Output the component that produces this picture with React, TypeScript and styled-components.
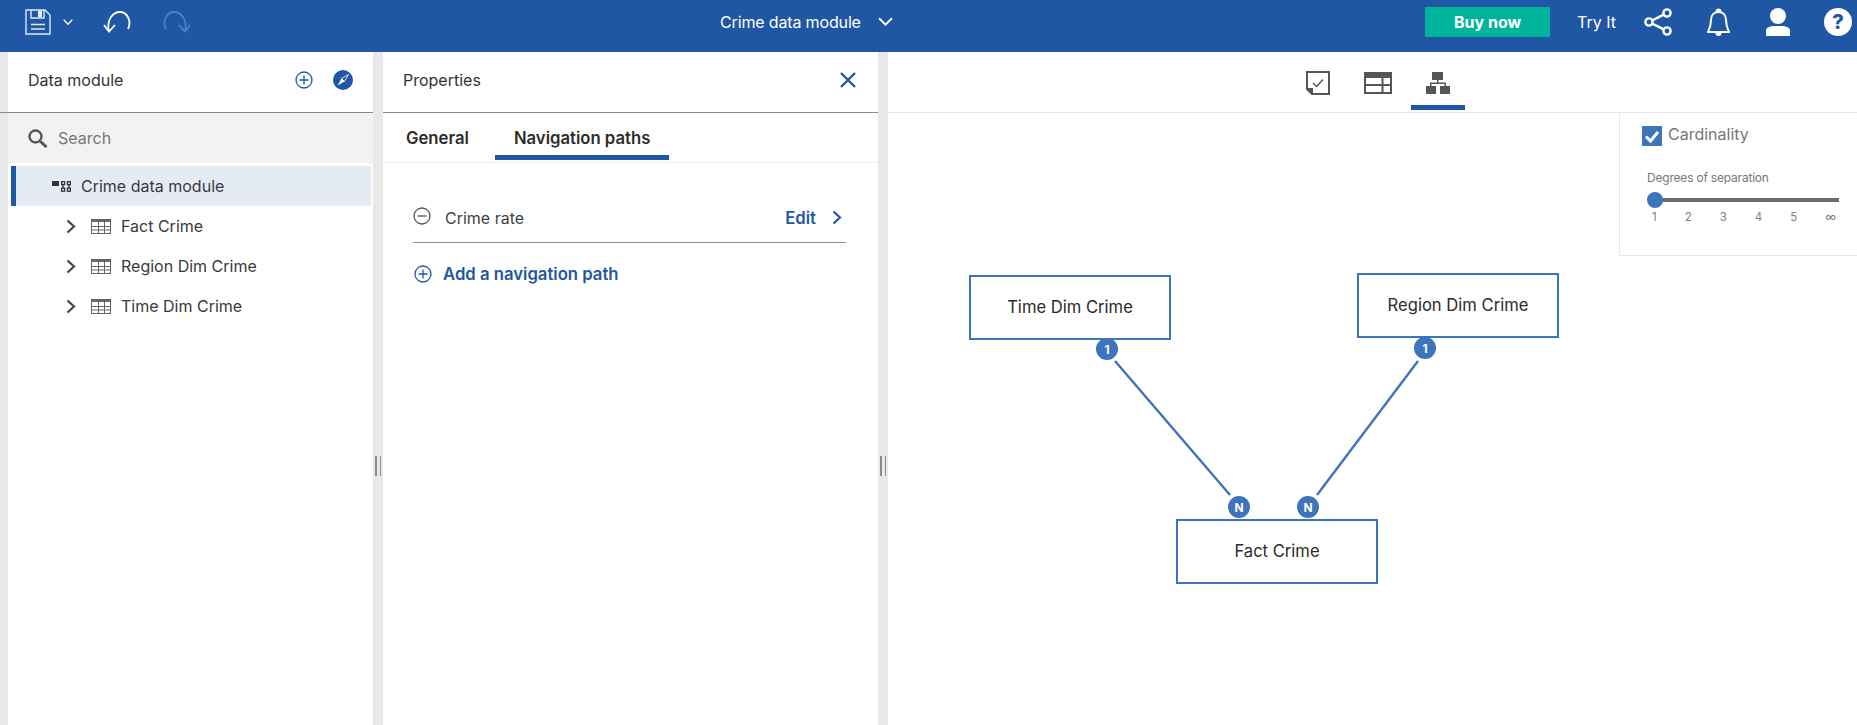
import * as React from "react";
import styled, { createGlobalStyle } from "styled-components";

const BLUE = "#1f57a4";
const DIAGRAM_BLUE = "#3d74bb";

const GlobalStyle = createGlobalStyle`
  html, body {
    margin: 0;
    padding: 0;
    height: 100%;
    overflow: hidden;
    background: #fff;
  }
  body {
    font-family: Inter, "Liberation Sans", sans-serif;
    font-size: 16px;
    color: #333;
  }
  svg {
    display: block;
    flex: none;
  }
`;

const Page = styled.div`
  width: 1857px;
  height: 725px;
  display: flex;
  flex-direction: column;
`;

const TopBar = styled.header`
  height: 52px;
  flex: none;
  background: ${BLUE};
  color: #fff;
  display: grid;
  grid-template-columns: 720px auto 1fr;
  align-items: center;
`;

const BarLeft = styled.div`
  display: flex;
  align-items: center;
  padding-left: 25px;
  margin-top: -8px;
  & > svg:nth-child(2) {
    margin-left: 12px;
  }
  & > svg:nth-child(3) {
    margin-left: 30px;
  }
  & > svg:nth-child(4) {
    margin-left: 32px;
  }
`;

const BarTitle = styled.div`
  display: flex;
  align-items: center;
  gap: 17px;
  font-size: 16px;
  letter-spacing: -0.15px;
  margin-top: -9px;
`;

const BarRight = styled.div`
  display: flex;
  align-items: center;
  justify-content: flex-end;
  padding-right: 5px;
`;

const BuyButton = styled.div`
  width: 125px;
  height: 30px;
  margin-top: -8px;
  background: #00b49b;
  color: #fff;
  font-weight: 700;
  font-size: 16px;
  display: flex;
  align-items: center;
  justify-content: center;
`;

const TryIt = styled.span`
  margin: -8px 28px 0 27px;
  font-size: 16px;
`;

const BarIcon = styled.div<{ $gap: number }>`
  margin-right: ${(props) => props.$gap}px;
  margin-top: -8px;
`;

const HelpBadge = styled.div`
  width: 28px;
  height: 28px;
  margin-top: -8px;
  border-radius: 50%;
  background: #fff;
  color: ${BLUE};
  font-size: 20px;
  font-weight: 800;
  display: flex;
  align-items: center;
  justify-content: center;
`;

const Body = styled.div`
  flex: 1;
  display: flex;
  min-height: 0;
`;

const Gutter = styled.div`
  width: 8px;
  flex: none;
  background: #e8e8e8;
  & > div {
    height: 60px;
    border-bottom: 1px solid #8a8a8a;
  }
`;

const Splitter = styled.div`
  width: 10px;
  flex: none;
  background: #e8e8e8;
  display: flex;
  justify-content: center;
  align-items: flex-start;
  gap: 3px;
  padding-top: 404px;
  box-sizing: border-box;
  & > i {
    display: block;
    width: 1.5px;
    height: 20px;
    background: #8c8c8c;
  }
`;

const Panel = styled.section<{ $width: number }>`
  width: ${(props) => props.$width}px;
  flex: none;
  display: flex;
  flex-direction: column;
  background: #fff;
`;

const PanelHeader = styled.div`
  height: 56px;
  flex: none;
  border-bottom: 1px solid #8a8a8a;
  display: flex;
  align-items: center;
  justify-content: space-between;
  padding: 0 20px 4px;
  font-size: 16px;
  & > svg {
    margin-right: 2px;
  }
`;

const HeaderIcons = styled.div`
  display: flex;
  align-items: center;
  gap: 20px;
`;

const SearchRow = styled.div`
  height: 50px;
  flex: none;
  background: #f2f2f2;
  display: flex;
  align-items: center;
  gap: 10px;
  padding-left: 20px;
  color: #777;
  margin-bottom: 3px;
`;

const Tree = styled.div`
  display: flex;
  flex-direction: column;
  padding: 0 2px 0 3px;
`;

const TreeRow = styled.div<{ $selected?: boolean }>`
  height: 40px;
  box-sizing: border-box;
  display: flex;
  align-items: center;
  color: #3a3a3a;
  padding-left: ${(props) => (props.$selected ? "36px" : "50px")};
  background: ${(props) => (props.$selected ? "#e4ebf4" : "transparent")};
  border-left: 5px solid ${(props) => (props.$selected ? BLUE : "transparent")};
  gap: ${(props) => (props.$selected ? "10px" : "15px")};
`;

const TreeLabel = styled.span`
  margin-left: -5px;
`;

const Tabs = styled.div`
  height: 50px;
  flex: none;
  box-sizing: border-box;
  border-bottom: 1px solid #ececec;
  display: flex;
  padding-left: 4px;
`;

const Tab = styled.div<{ $active?: boolean }>`
  height: 47px;
  box-sizing: border-box;
  padding: 7px 19px 0;
  display: flex;
  align-items: center;
  font-size: 16.7px;
  font-weight: 600;
  color: #2c2c2c;
  border-bottom: 5px solid ${(props) => (props.$active ? BLUE : "transparent")};
  &:first-child {
    margin-right: 7px;
  }
`;

const PathBody = styled.div`
  padding: 36px 32px 0 30px;
`;

const PathRow = styled.div`
  height: 44px;
  box-sizing: border-box;
  border-bottom: 1px solid #8f8f8f;
  display: flex;
  align-items: center;
  gap: 14px;
  padding-bottom: 6px;
  color: #3f3f3f;
  & > svg {
    margin-top: -4px;
  }
`;

const EditLink = styled.div`
  margin-left: auto;
  display: flex;
  align-items: center;
  gap: 16px;
  color: ${BLUE};
  font-size: 16.7px;
  font-weight: 600;
  padding-right: 4px;
`;

const AddRow = styled.div`
  display: flex;
  align-items: center;
  gap: 11px;
  padding: 21px 0 0 1px;
  color: ${BLUE};
  font-size: 16.7px;
  font-weight: 600;
`;

const Main = styled.main`
  flex: 1;
  display: flex;
  flex-direction: column;
  min-width: 0;
`;

const ViewTabs = styled.div`
  height: 61px;
  flex: none;
  box-sizing: border-box;
  border-bottom: 1px solid #e6e6e6;
  display: flex;
  padding-left: 416px;
  gap: 32px;
`;

const ViewTab = styled.div<{ $active?: boolean }>`
  width: ${(props) => (props.$active ? "54px" : "28px")};
  height: 58px;
  box-sizing: border-box;
  display: flex;
  align-items: flex-start;
  justify-content: center;
  padding-top: 20px;
  border-bottom: 5px solid ${(props) => (props.$active ? BLUE : "transparent")};
  margin-left: ${(props) => (props.$active ? "-13px" : "0")};
  &:first-child {
    padding-top: 19px;
  }
`;

const Canvas = styled.div`
  position: relative;
  flex: 1;
`;

const Links = styled.svg`
  position: absolute;
  left: 0;
  top: 0;
`;

const EntityNode = styled.div<{ $x: number; $y: number }>`
  position: absolute;
  left: ${(props) => props.$x}px;
  top: ${(props) => props.$y}px;
  width: 202px;
  height: 65px;
  box-sizing: border-box;
  border: 2.5px solid ${DIAGRAM_BLUE};
  background: #fff;
  display: flex;
  align-items: center;
  justify-content: center;
  padding-bottom: 2px;
  font-size: 16.6px;
  color: #2b2b2b;
`;

const CardBadge = styled.div<{ $x: number; $y: number }>`
  position: absolute;
  left: ${(props) => props.$x - 11}px;
  top: ${(props) => props.$y - 11}px;
  width: 22px;
  height: 22px;
  border-radius: 50%;
  background: ${DIAGRAM_BLUE};
  color: #fff;
  font-size: 12px;
  font-weight: 700;
  display: flex;
  align-items: center;
  justify-content: center;
`;

const SettingsCard = styled.aside`
  position: absolute;
  right: 0;
  top: 0;
  width: 238px;
  height: 143px;
  box-sizing: border-box;
  border-left: 1px solid #e8e8e8;
  border-bottom: 1px solid #e8e8e8;
  background: #fff;
  padding: 13px 18px 0 22px;
  color: #777;
`;

const CheckRow = styled.div`
  display: flex;
  align-items: center;
  gap: 6px;
  font-size: 16px;
  margin-bottom: 24px;
  & > span {
    margin-top: -5px;
  }
`;

const SliderLabel = styled.div`
  font-size: 12px;
  padding-left: 5px;
  letter-spacing: -0.2px;
`;

const SliderTrack = styled.div`
  position: relative;
  height: 4px;
  margin: 13px 0 0 13px;
  background: #6b6f73;
  & > i {
    position: absolute;
    left: -8px;
    top: -6px;
    width: 16px;
    height: 16px;
    border-radius: 50%;
    background: ${DIAGRAM_BLUE};
  }
`;

const SliderTicks = styled.div`
  display: flex;
  justify-content: space-between;
  margin: 8px 3px 0 10px;
  font-size: 11.5px;
  color: #808080;
`;

const ChevronRight = ({ color = "#444", w = 10, h = 15 }: { color?: string; w?: number; h?: number }) => (
  <svg width={w} height={h} viewBox="0 0 10 15" fill="none" stroke={color} strokeWidth="2.2">
    <path d="M1.5 1.5 L8 7.5 L1.5 13.5" />
  </svg>
);

const ChevronDown = ({ w, h, sw }: { w: number; h: number; sw: number }) => (
  <svg width={w} height={h} viewBox="0 0 14 8" fill="none" stroke="#fff" strokeWidth={sw}>
    <path d="M1 1 L7 7 L13 1" />
  </svg>
);

const TableIcon = () => (
  <svg width="20" height="15" viewBox="0 0 20 15">
    <rect x="0.5" y="0.5" width="19" height="14" fill="none" stroke="#666" />
    <rect width="20" height="3" fill="#666" />
    <path d="M0 7.5 H20 M0 11 H20 M7.5 3 V15 M13.5 3 V15" stroke="#666" />
  </svg>
);

const ModuleIcon = () => (
  <svg width="19" height="11" viewBox="0 0 19 11">
    <rect y="0" width="7" height="5" fill="#333" />
    <g fill="none" stroke="#333" strokeWidth="1.3">
      <rect x="9.6" y="0.6" width="3" height="3" />
      <rect x="15.4" y="0.6" width="3" height="3" />
      <rect x="9.6" y="7.2" width="3" height="3" />
      <rect x="15.4" y="7.2" width="3" height="3" />
      <path d="M11 3.6 V7 M17 3.6 V7" />
    </g>
  </svg>
);

const CircleSign = ({ plus, color }: { plus?: boolean; color: string }) => (
  <svg width="18" height="18" viewBox="0 0 18 18" fill="none" stroke={color} strokeWidth="1.3">
    <circle cx="9" cy="9" r="8" />
    <path d={plus ? "M4.5 9 H13.5 M9 4.5 V13.5" : "M4.5 9 H13.5"} />
  </svg>
);

const tables = ["Fact Crime", "Region Dim Crime", "Time Dim Crime"];
const ticks = ["1", "2", "3", "4", "5", "∞"];

const App = () => (
  <Page>
    <GlobalStyle />
    <TopBar>
      <BarLeft>
        <svg width="26" height="26" viewBox="0 0 26 26" fill="none" stroke="#dfe9f5" strokeWidth="1.4">
          <path d="M1 1 H20 L25 6 V25 H1 Z" />
          <path d="M6 1 V9 H19 V1" />
          <rect x="13" y="1.5" width="4" height="6.5" fill="#dfe9f5" stroke="none" />
          <path d="M6 15.5 H20 M6 20 H20" />
        </svg>
        <ChevronDown w={10} h={6} sw={2} />
        <svg width="28" height="22" viewBox="0 0 28 22" fill="none" stroke="#fff" strokeWidth="1.8">
          <path d="M6 20 C3 9 10 1 17 1 C24 1 29 10 25 18" />
          <path d="M1 14 L6 20.5 L12 14" />
        </svg>
        <svg width="28" height="22" viewBox="0 0 28 22" fill="none" stroke="#4f7fbd" strokeWidth="1.8">
          <path d="M22 20 C25 9 18 1 11 1 C4 1 -1 10 3 18" />
          <path d="M27 14 L22 20.5 L16 14" />
        </svg>
      </BarLeft>
      <BarTitle>
        Crime data module
        <ChevronDown w={15} h={9} sw={1.8} />
      </BarTitle>
      <BarRight>
        <BuyButton>Buy now</BuyButton>
        <TryIt>Try It</TryIt>
        <BarIcon $gap={35}>
          <svg width="28" height="28" viewBox="0 0 28 28" fill="none" stroke="#fff" strokeWidth="2.4">
            <circle cx="5" cy="14" r="3.6" />
            <circle cx="23" cy="5" r="3.6" />
            <circle cx="23" cy="23" r="3.6" />
            <path d="M8.2 12.4 L19.8 6.6 M8.2 15.6 L19.8 21.4" />
          </svg>
        </BarIcon>
        <BarIcon $gap={36}>
          <svg width="23" height="28" viewBox="0 0 23 28" fill="none" stroke="#fff" strokeWidth="2">
            <path d="M1 24 C3 20 4 17 4 12 C4 7 7 4 11.5 4 C16 4 19 7 19 12 C19 17 20 20 22 24 Z" />
            <path d="M9.5 3.5 A2 2 0 0 1 13.5 3.5" fill="#fff" />
            <path d="M8.5 25 A3 3 0 0 0 14.5 25 Z" fill="#fff" stroke="none" />
          </svg>
        </BarIcon>
        <BarIcon $gap={34}>
          <svg width="24" height="28" viewBox="0 0 24 28" fill="#fff">
            <ellipse cx="12" cy="8" rx="8" ry="8" />
            <path d="M0 28 V22.5 C0 19.5 4 18 8 18 H16 C20 18 24 19.5 24 22.5 V28 Z" />
          </svg>
        </BarIcon>
        <HelpBadge>?</HelpBadge>
      </BarRight>
    </TopBar>
    <Body>
      <Gutter>
        <div />
      </Gutter>
      <Panel $width={365}>
        <PanelHeader>
          Data module
          <HeaderIcons>
            <CircleSign plus color={BLUE} />
            <svg width="20" height="20" viewBox="0 0 20 20">
              <circle cx="10" cy="10" r="10" fill={BLUE} />
              <path d="M15.5 4.5 L11.5 11.5 L4.5 15.5 L8.5 8.5 Z" fill="#fff" />
              <path d="M15.5 4.5 L11.5 11.5 L8.5 8.5 Z" fill={BLUE} stroke="#fff" strokeWidth="0.8" />
            </svg>
          </HeaderIcons>
        </PanelHeader>
        <SearchRow>
          <svg width="20" height="19" viewBox="0 0 20 19" fill="none" stroke="#555">
            <circle cx="7.5" cy="7.5" r="6" strokeWidth="2.4" />
            <path d="M12.5 12.5 L18.5 18" strokeWidth="3" />
          </svg>
          Search
        </SearchRow>
        <Tree>
          <TreeRow $selected>
            <ModuleIcon />
            Crime data module
          </TreeRow>
          {tables.map((name) => (
            <TreeRow key={name}>
              <ChevronRight />
              <TableIcon />
              <TreeLabel>{name}</TreeLabel>
            </TreeRow>
          ))}
        </Tree>
      </Panel>
      <Splitter>
        <i />
        <i />
      </Splitter>
      <Panel $width={495}>
        <PanelHeader>
          Properties
          <svg width="16" height="16" viewBox="0 0 16 16" stroke={BLUE} strokeWidth="2.4">
            <path d="M1 1 L15 15 M15 1 L1 15" />
          </svg>
        </PanelHeader>
        <Tabs>
          <Tab>General</Tab>
          <Tab $active>Navigation paths</Tab>
        </Tabs>
        <PathBody>
          <PathRow>
            <CircleSign color="#555" />
            Crime rate
            <EditLink>
              Edit
              <ChevronRight color={BLUE} />
            </EditLink>
          </PathRow>
          <AddRow>
            <CircleSign plus color={BLUE} />
            Add a navigation path
          </AddRow>
        </PathBody>
      </Panel>
      <Splitter>
        <i />
        <i />
      </Splitter>
      <Main>
        <ViewTabs>
          <ViewTab>
            <svg width="24" height="24" viewBox="0 0 24 24" fill="none" stroke="#555" strokeWidth="2">
              <path d="M1 1 H23 V23 H6 L1 18 Z" />
              <path d="M1 18 H6 V23" fill="#555" />
              <path d="M7 12 L10.5 15.5 L17 8.5" strokeWidth="1.5" />
            </svg>
          </ViewTab>
          <ViewTab>
            <svg width="28" height="22" viewBox="0 0 28 22" fill="none" stroke="#555" strokeWidth="2">
              <rect x="1" y="1" width="26" height="20" />
              <rect width="28" height="6" fill="#555" stroke="none" />
              <path d="M1 13 H27 M18.5 5 V21" />
            </svg>
          </ViewTab>
          <ViewTab $active>
            <svg width="24" height="22" viewBox="0 0 24 22" fill="#555">
              <rect x="6" y="0" width="11" height="8" />
              <rect x="0" y="14" width="10" height="8" />
              <rect x="14" y="14" width="10" height="8" />
              <path d="M11 8 H12.5 V10.5 H20 V14 H18.5 V12 H5.5 V14 H4 V10.5 H11 Z" />
            </svg>
          </ViewTab>
        </ViewTabs>
        <Canvas>
          <Links width="969" height="612">
            <line x1="227" y1="248" x2="342" y2="382" stroke={DIAGRAM_BLUE} strokeWidth="2.4" />
            <line x1="530" y1="248" x2="429" y2="382" stroke={DIAGRAM_BLUE} strokeWidth="2.4" />
          </Links>
          <EntityNode $x={81} $y={162}>Time Dim Crime</EntityNode>
          <EntityNode $x={469} $y={160}>Region Dim Crime</EntityNode>
          <EntityNode $x={288} $y={406}>Fact Crime</EntityNode>
          <CardBadge $x={219} $y={236}>1</CardBadge>
          <CardBadge $x={537} $y={235}>1</CardBadge>
          <CardBadge $x={351} $y={394}>N</CardBadge>
          <CardBadge $x={420} $y={394}>N</CardBadge>
          <SettingsCard>
            <CheckRow>
              <svg width="20" height="20" viewBox="0 0 20 20">
                <rect width="20" height="20" fill={DIAGRAM_BLUE} />
                <path d="M4 10.5 L8.5 15 L16 6" fill="none" stroke="#fff" strokeWidth="3" />
              </svg>
              <span>Cardinality</span>
            </CheckRow>
            <SliderLabel>Degrees of separation</SliderLabel>
            <SliderTrack>
              <i />
            </SliderTrack>
            <SliderTicks>
              {ticks.map((tick) => (
                <span key={tick}>{tick}</span>
              ))}
            </SliderTicks>
          </SettingsCard>
        </Canvas>
      </Main>
    </Body>
  </Page>
);

export default App;
